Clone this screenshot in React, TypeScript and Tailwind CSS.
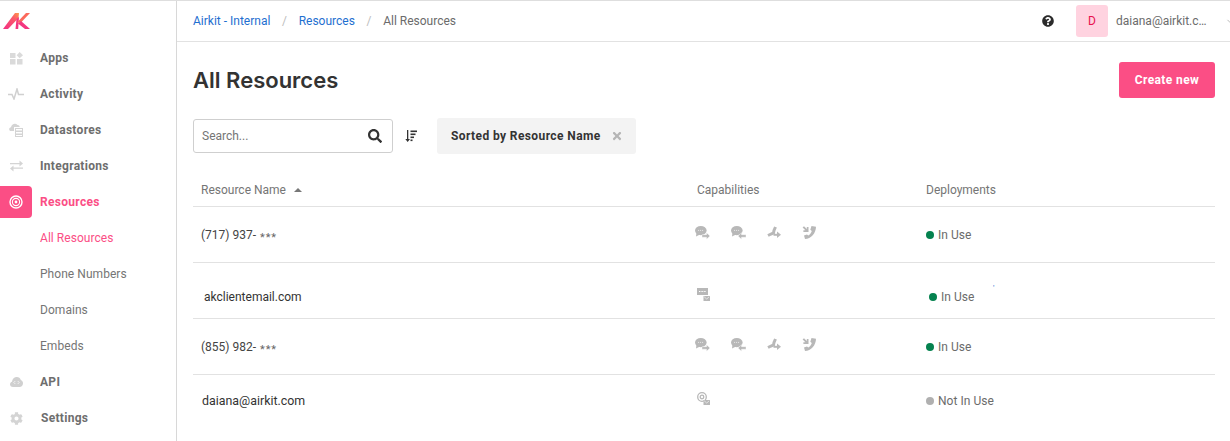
import { type ReactNode } from "react";
import { FaCog, FaQuestionCircle, FaSearch, FaTimes } from "react-icons/fa";
import { FiChevronDown } from "react-icons/fi";

const GRAY = "#b8b8b8";

function AppsIcon() {
  return (
    <svg width="13" height="13" viewBox="0 0 13 13" fill="#dadada">
      <rect x="0" y="1" width="5.5" height="5" />
      <rect x="0" y="7" width="5.5" height="5.5" />
      <rect x="7" y="7" width="5.5" height="5.5" />
      <path d="M9.7 0 13 3.2 9.7 6.2 6.6 3.200z" />
    </svg>
  );
}

function ActivityIcon() {
  return (
    <svg width="16" height="12" viewBox="0 0 16 12" fill="none" stroke="#d0d0d0" strokeWidth="1.5">
      <path d="M0 6.500h4L6 11 9 1l1.500 5.500H16" />
    </svg>
  );
}

function DatastoresIcon() {
  return (
    <svg width="14" height="14" viewBox="0 0 14 14" fill="#d4d4d4">
      <path d="M1.200 8C-.5 7 0 4.500 2 4.300 2.500 1.500 6-.5 8.500 2c1-.2 2 .5 2.300 2H5v4z" />
      <path d="M6 5h8v9H6zm1 1v1.500h6V6zm0 3v1.500h6V9zm0 3v1h6v-1z" fillRule="evenodd" />
    </svg>
  );
}

function IntegrationsIcon() {
  return (
    <svg width="13" height="12" viewBox="0 0 13 12" fill="#d4d4d4">
      <path d="M0 3h9.500V.5L13 3.500l-3.500 3V4.300H0zM13 7.500H3.500V5.500L0 8.500l3.500 3V8.800H13z" />
    </svg>
  );
}

function ResourcesIcon() {
  return (
    <svg width="14" height="14" viewBox="0 0 14 14" fill="none" stroke="#fff">
      <circle cx="7" cy="7" r="6" strokeWidth="1.400" />
      <circle cx="7" cy="7" r="3.600" strokeWidth="1.100" />
      <circle cx="7" cy="7" r="1.400" fill="#fff" strokeWidth="0" />
    </svg>
  );
}

function ApiIcon() {
  return (
    <svg width="13" height="10" viewBox="0 0 13 10" fill="#d0d0d0">
      <path d="M3 10C1 10 0 8.700 0 7.200 0 6 .8 5 2 4.700 2.300 2 4.300 0 6.800 0c2 0 3.500 1.300 4 3 1.200.4 2.200 1.600 2.200 3.200 0 2-1.500 3.800-3.500 3.800z" />
      <path d="M5.300 4 3.800 5.500 5.300 7M7.700 4l1.500 1.500L7.700 7" fill="none" stroke="#fff" strokeWidth=".7" />
    </svg>
  );
}

function Logo() {
  return (
    <svg width="27" height="17" viewBox="0 0 27 17">
      <defs>
        <linearGradient id="ak" gradientUnits="userSpaceOnUse" x1="4" y1="16" x2="20" y2="0">
          <stop offset="0" stopColor="#f4367f" />
          <stop offset="0.55" stopColor="#fb5a6a" />
          <stop offset="1" stopColor="#ffb03f" />
        </linearGradient>
      </defs>
      <path d="M0 16 12 0h4L15.500 5 5 16z" fill="url(#ak)" />
      <path d="M12.500 16 13.500 6 16 4l-.8 12z" fill="#f4367f" />
      <path d="M14 9.500 23 0h4l-9 9.500z" fill="#fb6a5c" />
      <path d="M15 10.500 18 8l9 8h-5z" fill="#f4367f" />
    </svg>
  );
}

function Bubble() {
  return (
    <>
      <ellipse cx="5.800" cy="4.600" rx="5.800" ry="4.600" />
      <path d="M1.500 6.500 1 10.500 5 8.500z" />
      <path d="M3 4.400h5.600" stroke="#e4e4e4" strokeWidth="1" strokeDasharray="1.100 .9" fill="none" />
    </>
  );
}

function ChatIn() {
  return (
    <svg width="15" height="14" viewBox="0 0 15 14" fill={GRAY}>
      <Bubble />
      <path d="M7 8.700h4.500V6.800L15 10l-3.500 3.200v-2H7z" stroke="#fff" strokeWidth=".4" />
    </svg>
  );
}

function ChatOut() {
  return (
    <svg width="15" height="14" viewBox="0 0 15 14" fill={GRAY}>
      <Bubble />
      <path d="M15 8.700h-4.500V6.800L7 10l3.500 3.200v-2H15z" stroke="#fff" strokeWidth=".4" />
    </svg>
  );
}

function CallForward() {
  return (
    <svg width="14" height="13" viewBox="0 0 14 13" fill="none" stroke={GRAY}>
      <path d="M8.500 1 7 4.500 6.500 7 4 8 1 9.500" strokeWidth="3" />
      <path d="M6.500 8.800h4" strokeWidth="2" />
      <path d="M10 5.500 14 8.800 10 12z" fill={GRAY} stroke="none" />
    </svg>
  );
}

function CallIn() {
  return (
    <svg width="14" height="13" viewBox="0 0 14 13" fill={GRAY}>
      <path d="M9.500 0 14 .7C14 7 9 13 3 13L2 9.500l3-1.100 1.300 1.200C8 8.500 9 7 9.800 5L8.300 3.800z" />
      <path d="M.6 1.500 2 .2 4.800 3V1h1.700v5H1.400V4.300h2z" />
    </svg>
  );
}

function SmsMail() {
  return (
    <svg width="13" height="13" viewBox="0 0 13 13">
      <rect x="0" y="0" width="11" height="7" fill={GRAY} />
      <path d="M2 3.500h7" stroke="#fff" strokeDasharray="1 .6" />
      <rect x="6.500" y="8" width="6.500" height="5" fill={GRAY} />
      <path d="M7.200 8.800 9.700 11l2.500-2.200" fill="none" stroke="#fff" strokeWidth=".6" />
    </svg>
  );
}

function AtMail() {
  return (
    <svg width="13" height="13" viewBox="0 0 13 13">
      <circle cx="5" cy="5" r="4.300" fill="none" stroke={GRAY} strokeWidth="1.300" />
      <circle cx="5" cy="5" r="1.800" fill="none" stroke={GRAY} strokeWidth="1.300" />
      <rect x="6.500" y="8" width="6.500" height="5" fill={GRAY} />
      <path d="M7.200 8.800 9.700 11l2.500-2.200" fill="none" stroke="#fff" strokeWidth=".6" />
    </svg>
  );
}

function SortIcon() {
  return (
    <svg width="12" height="12" viewBox="0 0 12 12" fill="#333">
      <path d="M2 0h1.300v9H5L2.700 12 .3 9H2z" />
      <rect x="5.500" y="0.500" width="6.500" height="1.600" />
      <rect x="5.500" y="3.500" width="5" height="1.600" />
      <rect x="5.500" y="6.500" width="3.500" height="1.600" />
      <rect x="5.500" y="9.500" width="2" height="1.600" />
    </svg>
  );
}

function PhoneCaps() {
  return (
    <div className="ml-[-2px] flex items-center gap-[21px] pb-[4px]">
      <ChatIn />
      <ChatOut />
      <CallForward />
      <CallIn />
    </div>
  );
}

function Status({ label, used = true }: { label: string; used?: boolean }) {
  return (
    <div className="flex items-center gap-1 text-[12px] tracking-[0.03px] text-[#6b6b6b]">
      <span className={`h-2 w-2 rounded-full ${used ? "bg-[#05824f]" : "bg-[#b0b0b0]"}`} />
      {label}
    </div>
  );
}

function NavItem({
  icon,
  label,
  active,
  labelClass = "ml-2",
}: {
  icon: ReactNode;
  label: string;
  active?: boolean;
  labelClass?: string;
}) {
  return (
    <div className="flex h-9 items-center">
      <div className={`flex h-8 w-8 items-center justify-center rounded-r-[4px] ${active ? "bg-[#fb4e85]" : ""}`}>
        {icon}
      </div>
      <span className={`text-[12px] font-bold tracking-[0.3px] ${labelClass} ${active ? "text-[#fb4e85]" : "text-[#6e6e6e]"}`}>
        {label}
      </span>
    </div>
  );
}

function SubItem({ label, active }: { label: string; active?: boolean }) {
  return (
    <div className={`flex h-9 items-center pl-10 text-[12px] tracking-[0.05px] ${active ? "text-[#fb4e85]" : "text-[#757575]"}`}>
      {label}
    </div>
  );
}

function Row({
  name,
  mask,
  caps,
  status,
  className,
  nameClass = "text-[#444] text-[12px] pt-px",
}: {
  name: string;
  mask?: string;
  caps: ReactNode;
  status: ReactNode;
  className: string;
  nameClass?: string;
}) {
  return (
    <div className={`grid grid-cols-[504px_229px_1fr] items-center ${className}`}>
      <div className={`pl-2 ${nameClass}`}>
        {name}
        {mask && <span className="ml-1 inline-block translate-y-[2px] text-[11px] tracking-[0.9px] text-[#666]">{mask}</span>}
      </div>
      <div>{caps}</div>
      <div>{status}</div>
    </div>
  );
}

export default function App() {
  return (
    <div className="flex h-[441px] w-[1230px] overflow-hidden border-t border-[#dedede] bg-white font-['Roboto',sans-serif]">
      <aside className="w-[177px] shrink-0 border-r border-[#d8d8d8]">
        <div className="flex h-[39px] items-start pl-[3px] pt-3">
          <Logo />
        </div>
        <NavItem icon={<AppsIcon />} label="Apps" />
        <NavItem icon={<ActivityIcon />} label="Activity" />
        <NavItem icon={<DatastoresIcon />} label="Datastores" />
        <NavItem icon={<IntegrationsIcon />} label="Integrations" />
        <NavItem icon={<ResourcesIcon />} label="Resources" active />
        <SubItem label="All Resources" active />
        <SubItem label="Phone Numbers" />
        <SubItem label="Domains" />
        <SubItem label="Embeds" />
        <NavItem icon={<ApiIcon />} label="API" />
        <NavItem icon={<FaCog size={13} color="#d4d4d4" />} label="Settings" labelClass="ml-[9px]" />
      </aside>

      <main className="min-w-0 flex-1 overflow-hidden">
        <header className="flex h-[41px] items-center border-b border-[#e2e2e2] pl-4 text-[12px]">
          <span className="text-[#1f6fd0]">Airkit - Internal</span>
          <span className="mx-[11.7px] text-[#bdbdbd]">/</span>
          <span className="text-[#1f6fd0]">Resources</span>
          <span className="mx-[11.7px] text-[#bdbdbd]">/</span>
          <span className="text-[#6b6b6b]">All Resources</span>
          <div className="mr-[-6px] ml-auto flex items-center">
            <FaQuestionCircle size={12} color="#2b2b2b" />
            <div className="ml-[22px] flex h-8 w-8 items-center justify-center rounded-[3px] bg-[#ffd3e0] text-[12px] text-[#e8114f]">
              D
            </div>
            <span className="ml-2 w-[96px] whitespace-nowrap text-[#6b6b6b]">daiana@airkit.c…</span>
            <FiChevronDown size={11} color="#b5b5b5" className="ml-[13px]" />
          </div>
        </header>

        <div className="px-4">
          <div className="flex items-center justify-between pt-5">
            <h1 className="font-['Inter',sans-serif] text-[22px] leading-9 font-semibold text-[#333]">All Resources</h1>
            <button className="mr-[-1px] h-9 w-[96px] rounded-[3px] bg-[#fb4e85] text-[12px] font-bold tracking-[0.4px] text-white">
              Create new
            </button>
          </div>

          <div className="mt-[20px] flex items-center">
            <div className="flex h-[34px] w-[200px] items-center justify-between rounded-[3px] border border-[#cfcfcf] pr-[10px] pl-2 text-[12px] text-[#757575]">
              Search...
              <FaSearch size={14} color="#333" />
            </div>
            <div className="ml-3">
              <SortIcon />
            </div>
            <div className="ml-[20px] flex h-9 w-[199px] items-center justify-between rounded-[3px] bg-[#f3f3f3] pr-[13px] pl-[14px] text-[12px] font-bold tracking-[0.4px] text-[#333]">
              Sorted by Resource Name
              <FaTimes size={12} color="#b5b5b5" />
            </div>
          </div>

          <div className="mt-[18px] mr-[-1px]">
            <div className="grid h-[35px] grid-cols-[504px_229px_1fr] items-center border-b border-[#e2e2e2] pt-[2px] text-[12px] text-[#757575]">
              <div className="flex items-center pl-2">
                Resource Name
                <span className="ml-2 h-0 w-0 border-x-[4px] border-b-[4px] border-x-transparent border-b-[#777]" />
              </div>
              <div>Capabilities</div>
              <div>Deployments</div>
            </div>
            <Row
              className="h-[56px] border-b border-[#e2e2e2]"
              name="(717) 937-"
              mask="***"
              caps={<PhoneCaps />}
              status={<Status label="In Use" />}
            />
            <Row
              className="h-[56px] border-b border-[#e2e2e2] pt-3"
              name="akclientemail.com"
              nameClass="text-[#333] text-[12px] translate-x-[3px]"
              caps={
                <div className="pb-[5px]">
                  <SmsMail />
                </div>
              }
              status={
                <div className="relative translate-x-[3px]">
                  <Status label="In Use" />
                  <span className="absolute top-[-4px] left-[64px] text-[8px] leading-none text-[#1f6fd0]">'</span>
                </div>
              }
            />
            <Row
              className="h-[56px] border-b border-[#e2e2e2]"
              name="(855) 982-"
              mask="***"
              caps={<PhoneCaps />}
              status={<Status label="In Use" />}
            />
            <Row
              className="h-[52px]"
              name="daiana@airkit.com"
              nameClass="text-[#333] text-[12.4px] translate-x-px"
              caps={
                <div className="pb-[5px]">
                  <AtMail />
                </div>
              }
              status={<Status label="Not In Use" used={false} />}
            />
          </div>
        </div>
      </main>
    </div>
  );
}
